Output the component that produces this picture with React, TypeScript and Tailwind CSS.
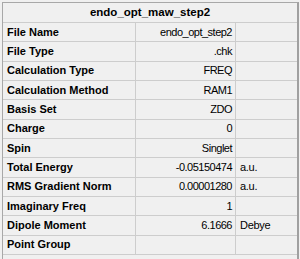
type Row = { label: string; value: string; unit?: string };

const rows: Row[] = [
  { label: "File Name", value: "endo_opt_step2" },
  { label: "File Type", value: ".chk" },
  { label: "Calculation Type", value: "FREQ" },
  { label: "Calculation Method", value: "RAM1" },
  { label: "Basis Set", value: "ZDO" },
  { label: "Charge", value: "0" },
  { label: "Spin", value: "Singlet" },
  { label: "Total Energy", value: "-0.05150474", unit: "a.u." },
  { label: "RMS Gradient Norm", value: "0.00001280", unit: "a.u." },
  { label: "Imaginary Freq", value: "1" },
  { label: "Dipole Moment", value: "6.1666", unit: "Debye" },
  { label: "Point Group", value: "" },
];

export default function App() {
  return (
    <div
      className="w-[300px] h-[259px] overflow-hidden bg-[#f0f0f0] pt-[2px] pl-[2px] pr-[1px] text-black"
      style={{ fontFamily: '"Liberation Sans", Arial, sans-serif' }}
    >
      <div className="h-[270px] border-l border-t border-[#a8a8a8] border-r-2 border-r-[#a0a0a0]">
        <div className="h-[20px] border-b border-[#cdcdcd] flex items-center justify-center text-[11.5px] font-bold leading-none">
          endo_opt_maw_step2
        </div>
        {rows.map((r) => (
          <div
            key={r.label}
            className="h-[19.35px] grid grid-cols-[133px_100px_1fr] border-b border-[#cdcdcd] text-[11px] leading-none"
          >
            <div className="border-r border-[#cdcdcd] flex items-center pl-[4px] font-bold">
              {r.label}
            </div>
            <div className="border-r border-[#cdcdcd] flex items-center justify-end pr-[3px] tracking-[-0.5px]">
              {r.value}
            </div>
            <div className="flex items-center pl-[4px] tracking-[-0.3px]">{r.unit ?? ""}</div>
          </div>
        ))}
      </div>
    </div>
  );
}
